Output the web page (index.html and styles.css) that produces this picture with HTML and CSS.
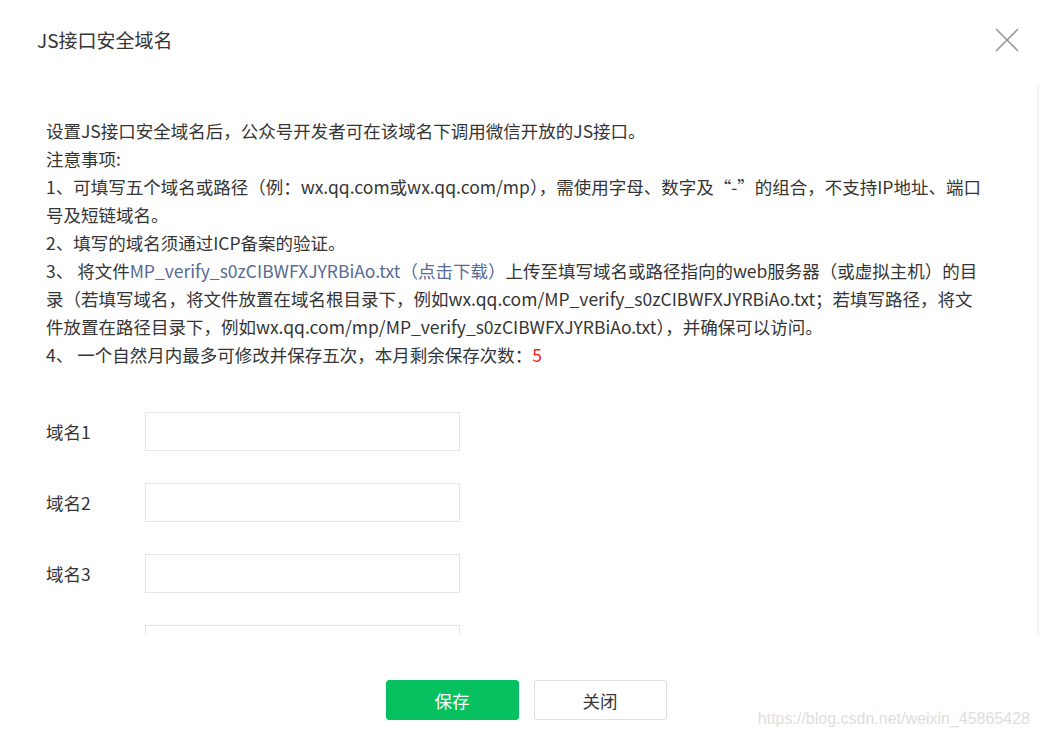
FILE: index.html
```html
<!DOCTYPE html>
<html lang="zh-CN">
<head>
<meta charset="utf-8">
<title>JS接口安全域名</title>
<link rel="stylesheet" href="styles.css">
</head>
<body>
<div class="dialog">
  <div class="dialog-header">
    <h3 class="dialog-title">JS接口安全域名</h3>
    <button class="dialog-close" aria-label="关闭">
      <svg width="24" height="24" viewBox="0 0 24 24"><path d="M1 1L23 23M23 1L1 23" stroke="#9a9a9a" stroke-width="1.6" fill="none"/></svg>
    </button>
  </div>
  <div class="dialog-body">
    <div class="scroll-content">
      <div class="tips">
        <p>设置JS接口安全域名后，公众号开发者可在该域名下调用微信开放的JS接口。</p>
        <p>注意事项:</p>
        <p>1、可填写五个域名或路径（例：wx.qq.com或wx.qq.com/mp），需使用字母、数字及“-”的组合，不支持IP地址、端口号及短链域名。</p>
        <p>2、填写的域名须通过ICP备案的验证。</p>
        <p>3、 将文件<a class="link" href="#">MP_verify_s0zCIBWFXJYRBiAo.txt（点击下载）</a>上传至填写域名或路径指向的web服务器（或虚拟主机）的目录（若填写域名，将文件放置在域名根目录下，例如wx.qq.com/MP_verify_s0zCIBWFXJYRBiAo.txt；若填写路径，将文件放置在路径目录下，例如wx.qq.com/mp/MP_verify_s0zCIBWFXJYRBiAo.txt），并确保可以访问。</p>
        <p>4、 一个自然月内最多可修改并保存五次，本月剩余保存次数：<span class="count">5</span></p>
      </div>
      <div class="form">
        <div class="form-row"><label class="form-label">域名1</label><input class="form-input" type="text"></div>
        <div class="form-row"><label class="form-label">域名2</label><input class="form-input" type="text"></div>
        <div class="form-row"><label class="form-label">域名3</label><input class="form-input" type="text"></div>
        <div class="form-row"><label class="form-label">域名4</label><input class="form-input" type="text"></div>
        <div class="form-row"><label class="form-label">域名5</label><input class="form-input" type="text"></div>
      </div>
    </div>
    <div class="scrollbar"></div>
  </div>
  <div class="dialog-footer">
    <button class="btn btn-primary">保存</button>
    <button class="btn btn-default">关闭</button>
  </div>
  <div class="watermark">https://blog.csdn.net/weixin_45865428</div>
</div>
</body>
</html>
```
FILE: styles.css
```css
* { box-sizing: border-box; }
html, body {
  margin: 0;
  padding: 0;
  background: #fff;
}
body {
  font-family: "Noto Sans CJK SC", "Noto Sans", sans-serif;
  color: #353535;
  font-size: 17.5px;
}
.dialog {
  position: relative;
  width: 1039px;
  height: 736px;
  display: flex;
  flex-direction: column;
  overflow: hidden;
}
.dialog-header {
  height: 85px;
  display: flex;
  align-items: flex-start;
  justify-content: space-between;
  padding: 26px 20px 0 37px;
}
.dialog-title {
  margin: 0;
  font-size: 19px;
  font-weight: normal;
  line-height: 28px;
  color: #353535;
}
.dialog-close {
  border: 0;
  background: none;
  padding: 0;
  margin-top: 2px;
  width: 24px;
  height: 24px;
  cursor: pointer;
}
.dialog-close svg { display: block; }
.dialog-body {
  height: 550px;
  display: flex;
}
.scroll-content {
  flex: 1;
  overflow: hidden;
  padding: 32px 52px 0 46px;
}
.scrollbar {
  width: 2px;
  background: #f0f0f0;
}
.tips p {
  margin: 0;
  line-height: 28px;
}
.link {
  color: #576b95;
  text-decoration: none;
}
.count { color: #fa1e1e; }
.form {
  margin-top: 43px;
}
.form-row {
  display: flex;
  align-items: center;
  height: 39px;
  margin-bottom: 32px;
}
.form-label {
  width: 99px;
  line-height: 39px;
}
.form-input {
  width: 315px;
  height: 39px;
  border: 1px solid #e5e5e5;
  border-radius: 0;
  padding: 0 10px;
  font: inherit;
  outline: none;
}
.dialog-footer {
  flex: 1;
  display: flex;
  justify-content: center;
  align-items: flex-start;
  gap: 15px;
  padding: 45px 0 0 13px;
}
.btn {
  width: 133px;
  height: 40px;
  border-radius: 3px;
  font-family: inherit;
  font-size: 17.5px;
  cursor: pointer;
  padding: 0;
}
.btn-primary {
  background: #07c160;
  border: 1px solid #07c160;
  color: #fff;
}
.btn-default {
  background: #fff;
  border: 1px solid #e0e0e0;
  color: #353535;
}
.watermark {
  position: absolute;
  right: 9px;
  bottom: 8px;
  font-family: "Liberation Sans", Arial, sans-serif;
  font-size: 16px;
  color: #dedede;
}
```
